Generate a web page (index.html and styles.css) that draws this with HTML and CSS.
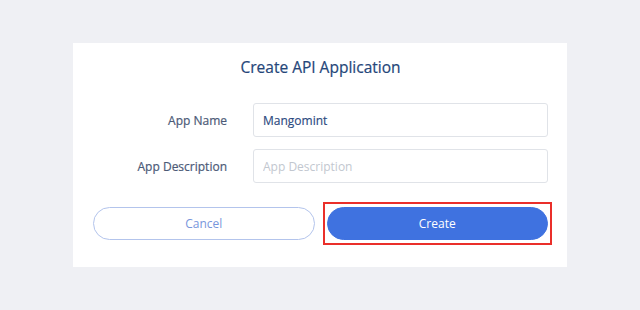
FILE: index.html
```html
<!DOCTYPE html>
<html>
<head>
<meta charset="utf-8">
<link rel="stylesheet" href="styles.css">
</head>
<body>
<div class="page">
  <div class="card">
    <h1 class="title">Create API Application</h1>
    <div class="form">
      <label class="label" for="name">App Name</label>
      <input class="input" id="name" type="text" value="Mangomint">
      <label class="label" for="desc">App Description</label>
      <input class="input" id="desc" type="text" placeholder="App Description">
    </div>
    <div class="actions">
      <button class="btn btn-cancel">Cancel</button>
      <div class="highlight">
        <button class="btn btn-create">Create</button>
      </div>
    </div>
  </div>
</div>
</body>
</html>
```
FILE: styles.css
```css
html, body {
  margin: 0;
  padding: 0;
  background: #eff0f4;
  font-family: "Open Sans", "Noto Sans", sans-serif;
}
.page {
  padding: 43px 0 0 73px;
}
.card {
  box-sizing: border-box;
  width: 494px;
  height: 224px;
  background: #ffffff;
  padding: 13px 19px 0 20px;
}
.title {
  margin: 0;
  text-align: center;
  font-size: 15.5px;
  line-height: 22px;
  font-weight: 500;
  color: #254679;
  -webkit-text-stroke: 0.2px #254679;
}
.form {
  margin-top: 25px;
  display: grid;
  grid-template-columns: 134px 1fr;
  column-gap: 26px;
  row-gap: 12px;
  align-items: center;
}
.label {
  text-align: right;
  font-size: 12px;
  color: #4c5a77;
  -webkit-text-stroke: 0.2px #4c5a77;
}
.input {
  box-sizing: border-box;
  height: 34px;
  width: 100%;
  border: 1px solid #e0e3e8;
  border-radius: 3px;
  padding: 0 9px;
  font-family: inherit;
  font-size: 12px;
  color: #2c4a80;
  -webkit-text-stroke: 0.15px #2c4a80;
  outline: none;
}
.input::placeholder {
  color: #c2c7cf;
  -webkit-text-stroke: 0;
}
.actions {
  margin-top: 24px;
  display: grid;
  grid-template-columns: 1fr 1fr;
  column-gap: 12px;
}
.highlight {
  position: relative;
  display: flex;
}
.highlight::after {
  content: "";
  position: absolute;
  top: -5px;
  bottom: -5px;
  left: -4px;
  right: -4px;
  border: 2px solid #ea2f2a;
  pointer-events: none;
}
.btn {
  box-sizing: border-box;
  width: 100%;
  height: 33px;
  border-radius: 17px;
  font-family: inherit;
  font-size: 12px;
  cursor: pointer;
}
.btn-cancel {
  background: #ffffff;
  border: 1px solid #b3c4ec;
  color: #7896dc;
}
.btn-create {
  background: #3f72e0;
  border: 1px solid #3f72e0;
  color: #ffffff;
}
```
